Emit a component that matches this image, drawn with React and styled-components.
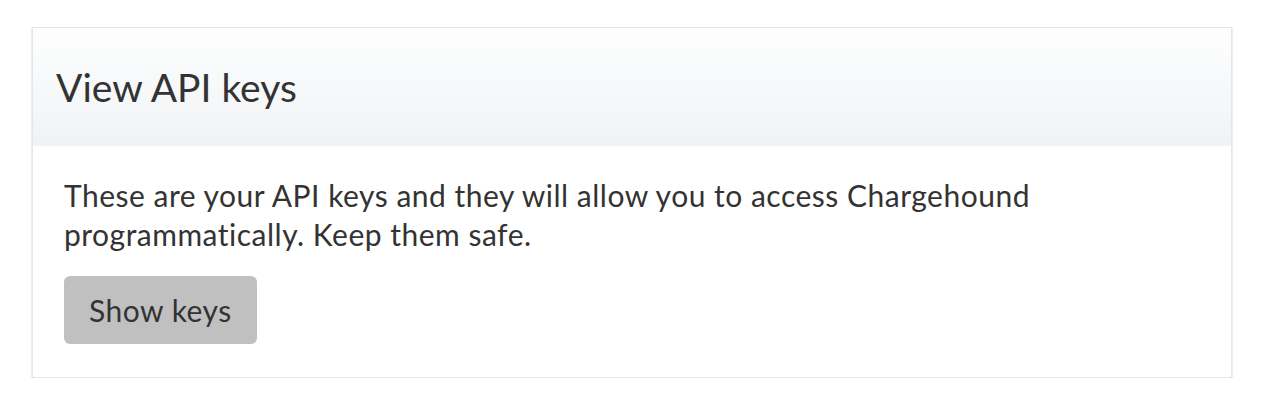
import styled, { createGlobalStyle } from 'styled-components';

const GlobalStyle = createGlobalStyle`
  body {
    margin: 0;
    background: #ffffff;
    font-family: Lato, 'Open Sans', sans-serif;
    color: #333333;
  }
`;

const Page = styled.div`
  padding: 27px 34px 0 32px;
`;

const Card = styled.section`
  border: 1px solid #e6e6e6;
  box-shadow: 0 1px 2px rgba(0, 0, 0, 0.2);
  background: #ffffff;
`;

const CardHeader = styled.header`
  height: 118px;
  display: flex;
  align-items: center;
  padding: 0 23px;
  background-image: linear-gradient(#fefefe, #f0f3f5);
`;

const Title = styled.h2`
  margin: 0;
  font-size: 39px;
  font-weight: 400;
  color: #333333;
`;

const CardBody = styled.div`
  padding: 30px 31px 33px;
`;

const Text = styled.p`
  margin: 0 0 22px;
  font-size: 30px;
  line-height: 39px;
  letter-spacing: 0.5px;
  max-width: 1060px;
`;

const Button = styled.button`
  display: block;
  height: 68px;
  padding: 0 25px;
  border: 0;
  border-radius: 6px;
  background: #c0c0c0;
  color: #333333;
  font-family: inherit;
  font-size: 30px;
  letter-spacing: 0.5px;
  cursor: pointer;
`;

function App() {
  return (
    <Page>
      <GlobalStyle />
      <Card>
        <CardHeader>
          <Title>View API keys</Title>
        </CardHeader>
        <CardBody>
          <Text>
            These are your API keys and they will allow you to access Chargehound
            programmatically. Keep them safe.
          </Text>
          <Button>Show keys</Button>
        </CardBody>
      </Card>
    </Page>
  );
}

export default App;
